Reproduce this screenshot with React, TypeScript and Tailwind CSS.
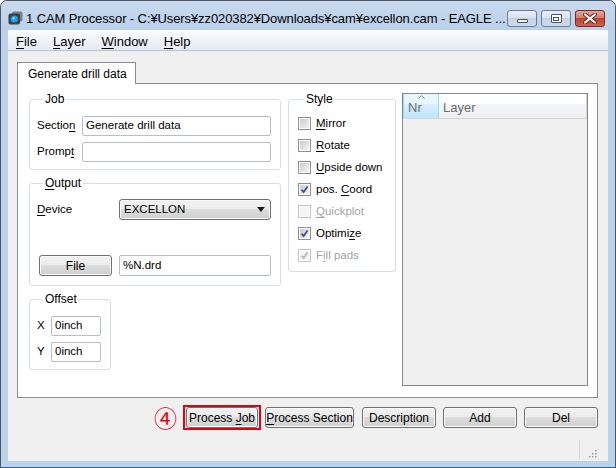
import type { ReactNode } from "react";

const BTN =
  "flex items-center h-[21px] border border-[#707070] rounded-[3px] bg-[linear-gradient(to_bottom,#f2f2f2_0%,#ebebeb_50%,#dddddd_50%,#cfcfcf_100%)] shadow-[inset_0_0_0_1px_#fbfbfb] text-[12px] text-black";

const INPUT =
  "flex items-center h-[20px] border border-[#b9bdc5] rounded-[2px] bg-white px-[3px] text-[11.5px] leading-none";

function U({ c }: { c: string }) {
  return <span className="underline underline-offset-[2px] decoration-[1px]">{c}</span>;
}

function Group({
  title,
  className,
  children,
}: {
  title: ReactNode;
  className: string;
  children: ReactNode;
}) {
  return (
    <fieldset className={`border border-[#d5dfe5] rounded-[3px] bg-white ${className}`}>
      <legend className="ml-[6px] px-[2px] text-[12px] leading-[14px]">{title}</legend>
      {children}
    </fieldset>
  );
}

function Check({
  label,
  checked,
  disabled,
}: {
  label: ReactNode;
  checked?: boolean;
  disabled?: boolean;
}) {
  return (
    <div className="flex items-center h-[13px] gap-[5px]">
      <div
        className={`w-[13px] h-[13px] border ${
          disabled ? "border-[#c4c4c4]" : "border-[#8e8f8f]"
        } bg-white p-[1px] shrink-0`}
      >
        <div
          className={`relative w-full h-full ${
            disabled
              ? "bg-[#f4f4f4]"
              : "bg-[linear-gradient(135deg,#cbcbcb_0%,#f4f4f4_100%)]"
          }`}
        >
          {checked && (
            <svg viewBox="0 0 9 9" className="absolute inset-0 w-[9px] h-[9px]">
              <path
                d="M1.6 4.6 L3.6 7 L7.6 1.4"
                fill="none"
                stroke={disabled ? "#b5b5b5" : "#3c4f8e"}
                strokeWidth="1.7"
              />
            </svg>
          )}
        </div>
      </div>
      <span className={`text-[11.5px] leading-none ${disabled ? "text-[#a3a3a3]" : "text-black"}`}>
        {label}
      </span>
    </div>
  );
}

function WinIcon() {
  return (
    <svg viewBox="0 0 15 14" className="w-[15px] h-[14px] shrink-0">
      <rect x="4" y="0.5" width="10.5" height="10" rx="2" fill="#7a7f86" />
      <rect x="0.5" y="2.5" width="11.5" height="11" rx="2" fill="#3b3f45" />
      <circle cx="6.3" cy="8" r="3.6" fill="#1fa0e8" />
      <circle cx="5.6" cy="7.2" r="1.2" fill="#7fd0ff" />
    </svg>
  );
}

export default function App() {
  return (
    <div className="w-[616px] h-[468px] flex flex-col bg-[#bcd1ea] border border-[#4c5664] border-b-[#1e6f8f] rounded-t-[7px] px-[7px] pb-[6px] font-['Liberation_Sans',Arial,sans-serif] text-black select-none overflow-hidden">
      {/* title bar */}
      <div className="h-[29px] flex items-start pt-[10px] bg-[linear-gradient(to_bottom,#c9daee,#bad0ea)] -mx-[7px] px-[7px]">
        <WinIcon />
        <span className="ml-[3px] text-[13px] leading-[15px] whitespace-nowrap tracking-[-0.1px]">
          1 CAM Processor - C:¥Users¥zz020382¥Downloads¥cam¥excellon.cam - EAGLE ...
        </span>
        <div className="ml-auto mr-[3px] flex gap-[4px] -mt-[1px]">
          <div className="w-[30px] h-[17px] rounded-[3px] border border-[#6c7c93] bg-[linear-gradient(to_bottom,#e9eff7_0%,#d6e1ee_50%,#c3d3e6_50%,#cddbeb_100%)] flex items-end justify-center pb-[3px]">
            <div className="w-[11px] h-[4px] bg-white border border-[#4a5568] rounded-[1px]" />
          </div>
          <div className="w-[30px] h-[17px] rounded-[3px] border border-[#6c7c93] bg-[linear-gradient(to_bottom,#e9eff7_0%,#d6e1ee_50%,#c3d3e6_50%,#cddbeb_100%)] flex items-center justify-center">
            <div className="w-[11px] h-[9px] bg-white border border-[#4a5568] rounded-[1px] p-[1.5px]">
              <div className="w-full h-full border border-[#4a5568]" />
            </div>
          </div>
          <div className="w-[30px] h-[17px] rounded-[3px] border border-[#7a2a22] bg-[linear-gradient(to_bottom,#e4a497_0%,#d67a6a_50%,#c2412f_50%,#d0634f_100%)] flex items-center justify-center">
            <svg viewBox="0 0 14 11" className="w-[14px] h-[11px]">
              <path
                d="M2 1.5 L12 9.5 M12 1.5 L2 9.5"
                stroke="#5a2a26"
                strokeWidth="4"
                strokeLinecap="round"
              />
              <path
                d="M2 1.5 L12 9.5 M12 1.5 L2 9.5"
                stroke="#ffffff"
                strokeWidth="2.2"
                strokeLinecap="round"
              />
            </svg>
          </div>
        </div>
      </div>

      {/* menu bar */}
      <div className="h-[21px] flex items-center pt-[3px] bg-[linear-gradient(to_bottom,#fcfdfe,#e4eaf4)] border-b border-[#b6c1d2] text-[13px]">
        <span className="px-[8px]">
          <U c="F" />ile
        </span>
        <span className="px-[8px]">
          <U c="L" />ayer
        </span>
        <span className="px-[8px]">
          <U c="W" />indow
        </span>
        <span className="px-[8px]">
          <U c="H" />elp
        </span>
      </div>

      {/* client area */}
      <div className="flex-1 flex flex-col bg-[#f0f0f0] pl-[9px] pr-[10px] pt-[11px]">
        {/* tab */}
        <div className="relative z-10 w-[119px] h-[22px] -mb-[1px] bg-white border border-b-0 border-[#898c95] flex items-center pl-[10px] pt-[1px] text-[12px]">
          Generate drill data
        </div>

        {/* tab page */}
        <div className="w-[581px] h-[315px] bg-white border border-[#898c95] flex items-start pl-[11px] pt-[8px]">
          {/* left column */}
          <div className="w-[252px] flex flex-col gap-[6px]">
            <Group title="Job" className="h-[78px] pl-[7px] pt-[10px]">
              <div className="flex flex-col gap-[6px]">
                <div className="flex items-center">
                  <span className="w-[45px] text-[11.5px]">
                    Sectio<U c="n" />
                  </span>
                  <div className={`${INPUT} w-[189px]`}>Generate drill data</div>
                </div>
                <div className="flex items-center">
                  <span className="w-[45px] text-[11.5px]">
                    Promp<U c="t" />
                  </span>
                  <div className={`${INPUT} w-[189px]`} />
                </div>
              </div>
            </Group>

            <Group
              title={
                <>
                  <U c="O" />
                  utput
                </>
              }
              className="h-[110px] pl-[7px] pt-[9px]"
            >
              <div className="flex items-center">
                <span className="w-[82px] text-[11.5px]">
                  <U c="D" />
                  evice
                </span>
                <div className={`${BTN} w-[152px] justify-between pl-[4px] pr-[5px]`}>
                  <span className="text-[11.5px]">EXCELLON</span>
                  <svg viewBox="0 0 8 5" className="w-[8px] h-[5px]">
                    <path d="M0 0 H8 L4 5 Z" fill="#1a1a1a" />
                  </svg>
                </div>
              </div>
              <div className="flex items-center mt-[35px]">
                <div className={`${BTN} justify-center w-[73px] ml-[2px]`}>
                  <span>File</span>
                </div>
                <div className={`${INPUT} w-[152px] h-[21px] ml-[7px]`}>%N.drd</div>
              </div>
            </Group>

            <Group title="Offset" className="w-[82px] h-[78px] pl-[7px] pt-[10px]">
              <div className="flex flex-col gap-[6px]">
                <div className="flex items-center">
                  <span className="w-[14px] text-[11.5px]">X</span>
                  <div className={`${INPUT} w-[50px]`}>0inch</div>
                </div>
                <div className="flex items-center">
                  <span className="w-[14px] text-[11.5px]">Y</span>
                  <div className={`${INPUT} w-[50px]`}>0inch</div>
                </div>
              </div>
            </Group>
          </div>

          {/* style column */}
          <Group title="Style" className="w-[108px] h-[180px] ml-[7px] pl-[9px] pt-[11px]">
            <div className="flex flex-col gap-[9px]">
              <Check label={<><U c="M" />irror</>} />
              <Check label={<><U c="R" />otate</>} />
              <Check label={<><U c="U" />pside down</>} />
              <Check checked label={<>pos. <U c="C" />oord</>} />
              <Check disabled label={<><U c="Q" />uickplot</>} />
              <Check checked label={<>Optimi<U c="z" />e</>} />
              <Check checked disabled label={<>F<U c="i" />ll pads</>} />
            </div>
          </Group>

          {/* layer list */}
          <div className="w-[186px] h-[293px] ml-[6px] mt-[1px] border border-[#828790] bg-[#f0f0f0] flex flex-col">
            <div className="h-[25px] flex bg-[linear-gradient(to_bottom,#ffffff_0%,#ffffff_40%,#f3f4f6_41%,#eef0f3_100%)] border-b border-[#d5d5d5] text-[13px] text-[#6d6d6d]">
              <div className="relative w-[36px] h-full flex items-center pl-[4px] pt-[3px] bg-[linear-gradient(to_bottom,#eaf6fd_0%,#eaf6fd_40%,#d9f0fc_41%,#bee6fd_100%)] border-x border-[#96d9f9]">
                <svg viewBox="0 0 7 4" className="absolute top-[1px] left-[14px] w-[7px] h-[4px]">
                  <path d="M0.5 3.5 L3.5 0.7 L6.5 3.5" fill="none" stroke="#6b8fb5" strokeWidth="1" />
                </svg>
                <span>Nr</span>
              </div>
              <div className="flex-1 flex items-center pl-[4px] pt-[3px] border-r border-[#d5d5d5]">
                <span>Layer</span>
              </div>
            </div>
          </div>
        </div>

        {/* button row */}
        <div className="flex items-center justify-end mt-[7px]">
          <span className="text-[#e60012] text-[23px] leading-none font-['Noto_Sans_CJK_JP',sans-serif] mr-[6px]">
            ④
          </span>
          <div className="border-2 border-[#e60012] px-[1px]">
            <div className={`${BTN} justify-center w-[72px]`}>
              <span>
                Process <U c="J" />ob
              </span>
            </div>
          </div>
          <div className={`${BTN} justify-center w-[89px] ml-[4px]`}>
            <span>
              <U c="P" />rocess Section
            </span>
          </div>
          <div className={`${BTN} justify-center w-[74px] ml-[8px]`}>
            <span>Description</span>
          </div>
          <div className={`${BTN} justify-center w-[74px] ml-[7px]`}>
            <span>Add</span>
          </div>
          <div className={`${BTN} justify-center w-[74px] ml-[7px]`}>
            <span>Del</span>
          </div>
        </div>

        {/* status / size grip */}
        <div className="mt-auto h-[21px] flex items-end justify-end">
          <div className="w-[1px] h-[19px] bg-[#d9d9d9] mr-[7px] mb-[2px]" />
          <svg viewBox="0 0 10 10" className="w-[10px] h-[10px] mb-[3px] mr-[1px]">
            {[
              [8, 2],
              [5, 5],
              [8, 5],
              [2, 8],
              [5, 8],
              [8, 8],
            ].map(([x, y]) => (
              <rect key={`${x}-${y}`} x={x} y={y} width="1.5" height="1.5" fill="#a0a0a0" />
            ))}
          </svg>
        </div>
      </div>
    </div>
  );
}
